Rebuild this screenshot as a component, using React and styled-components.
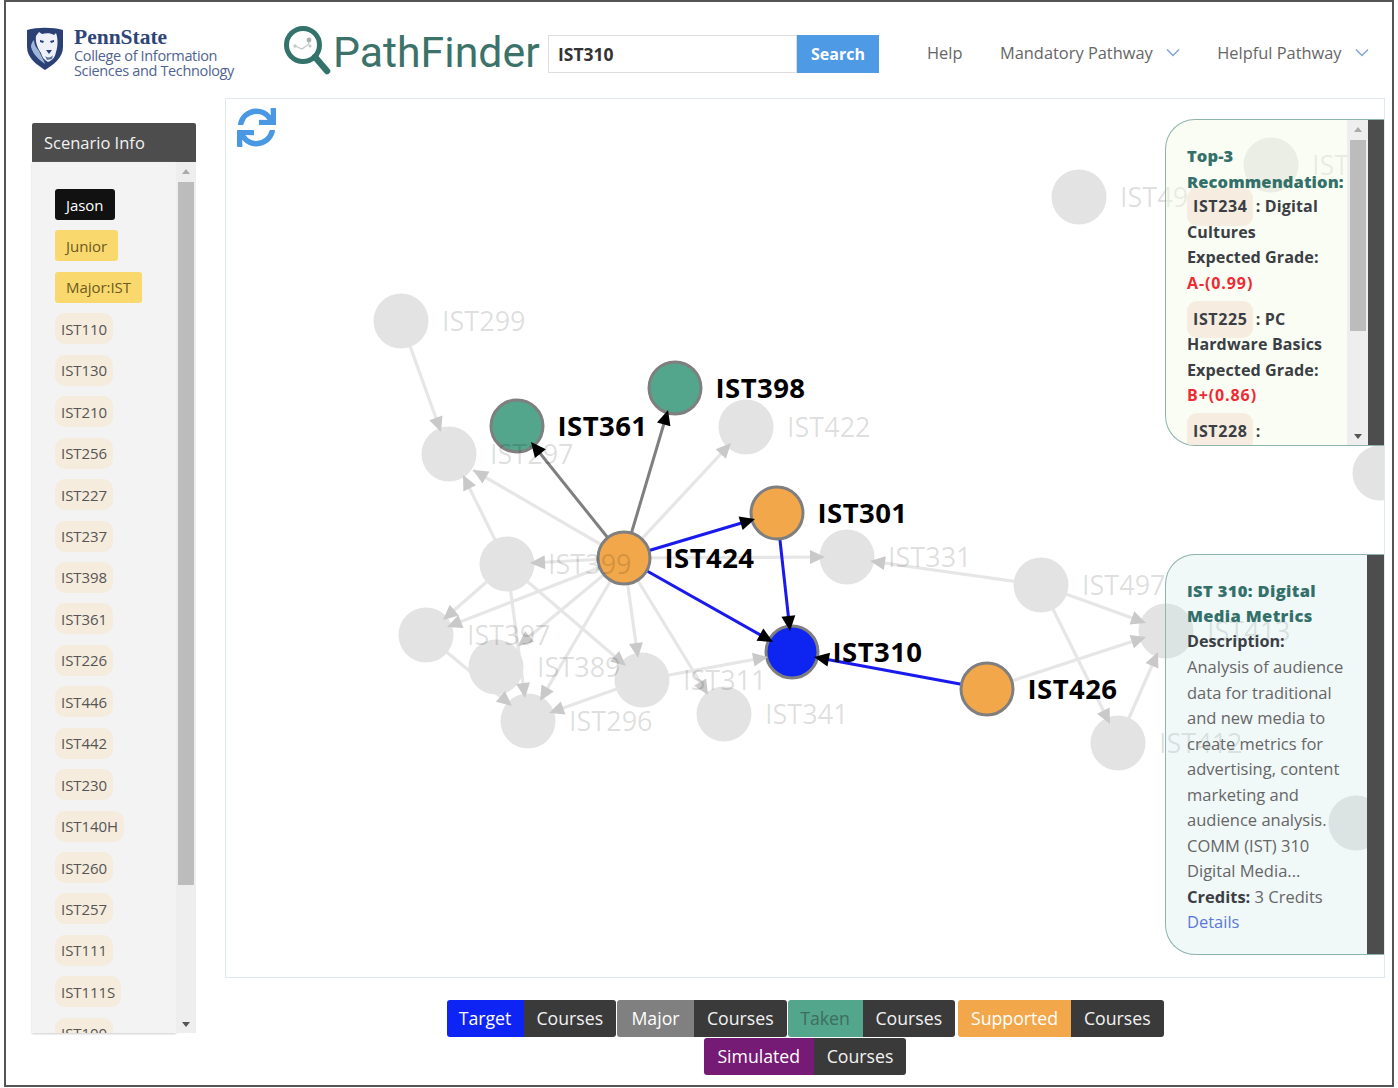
import React from "react";
import styled, { createGlobalStyle } from "styled-components";
import { FaSync } from "react-icons/fa";

const GlobalStyle = createGlobalStyle`
  html, body { margin: 0; padding: 0; background: #fff; }
  body { font-family: "Open Sans", "Liberation Sans", sans-serif; }
`;

const Frame = styled.div`
  box-sizing: border-box;
  width: 1390px;
  height: 1087px;
  margin: 0 0 0 4px;
  border: 2px solid #555;
`;

const Header = styled.header`
  height: 96px;
  display: flex;
  align-items: center;
  padding-left: 21px;
`;
const Brand = styled.div`
  display: flex;
  align-items: center;
  gap: 11px;
  width: 256px;
  margin-top: 4px;
`;
const ShieldSvg = styled.svg`
  flex: none;
  margin-bottom: 8px;
`;
const BrandText = styled.div`
  color: #50648f;
  font-size: 14.5px;
  line-height: 15px;
  letter-spacing: -0.35px;
  white-space: nowrap;
`;
const PennState = styled.div`
  font-family: "Liberation Serif", serif;
  font-weight: 700;
  font-size: 21.5px;
  line-height: 21px;
  letter-spacing: 0;
  color: #2e4577;
`;
const Product = styled.div`
  display: flex;
  align-items: center;
  gap: 2px;
  width: 265px;
  margin-top: 2px;
`;
const ProductName = styled.div`
  font-family: Roboto, sans-serif;
  font-size: 42.8px;
  color: #3b7269;
  white-space: nowrap;
  margin-top: 2px;
`;
const SearchBox = styled.div`
  display: flex;
  height: 38px;
  margin-top: 7px;
`;
const SearchInput = styled.div`
  box-sizing: border-box;
  width: 249px;
  border: 1px solid #ddd;
  padding-left: 9px;
  display: flex;
  align-items: center;
  font-size: 17.5px;
  font-weight: 700;
  color: #333;
`;
const SearchButton = styled.div`
  width: 82px;
  background: #4f9ae4;
  color: #fff;
  font-size: 16px;
  font-weight: 700;
  display: flex;
  align-items: center;
  justify-content: center;
`;
const Nav = styled.nav`
  display: flex;
  align-items: center;
  margin-left: 48px;
  margin-top: 5px;
  gap: 37.5px;
`;
const NavItem = styled.div`
  display: flex;
  align-items: center;
  gap: 13px;
  font-size: 16.4px;
  color: #666;
  white-space: nowrap;
`;

const Body = styled.div`
  display: flex;
  align-items: flex-start;
  padding-left: 26px;
`;
const Sidebar = styled.aside`
  width: 164px;
  margin-top: 25px;
  margin-right: 29px;
  flex: none;
`;
const SidebarTitle = styled.div`
  height: 39px;
  box-sizing: border-box;
  padding-left: 12px;
  display: flex;
  align-items: center;
  background: #4d4d4d;
  color: #f2f2f2;
  font-size: 16.5px;
  border-radius: 2px 2px 0 0;
`;
const SidebarBody = styled.div`
  display: flex;
  height: 871px;
`;
const TagList = styled.div`
  flex: 1;
  background: #f3f3f3;
  box-shadow: 0 1px 2px #ccc;
  overflow: hidden;
  display: flex;
  flex-direction: column;
  align-items: flex-start;
  gap: 10.45px;
  padding: 27px 0 0 23px;
`;
const Tag = styled.div`
  flex: none;
  box-sizing: border-box;
  height: 31px;
  display: flex;
  align-items: center;
  font-size: 15px;
  letter-spacing: -0.05px;
  padding: 0 ${(p) => (p.$kind === "course" ? "6px" : "11px")};
  border-radius: ${(p) => (p.$kind === "course" ? "10px" : "3px")};
  color: ${(p) => (p.$kind === "user" ? "#fff" : p.$kind === "level" ? "#6d5a1f" : "#555")};
  background: ${(p) => (p.$kind === "user" ? "#111" : p.$kind === "level" ? "#f9d96e" : "#f6ecdd")};
`;

const Track = styled.div`
  flex: none;
  box-sizing: border-box;
  width: ${(p) => p.$width}px;
  background: #eee;
  display: flex;
  flex-direction: column;
  align-items: center;
  justify-content: space-between;
  padding: 7px 0 6px;
`;
const TrackTop = styled.div`
  display: flex;
  flex-direction: column;
  align-items: center;
`;
const ArrowUp = styled.div`
  width: 0;
  height: 0;
  border: 4px solid transparent;
  border-top: 0;
  border-bottom: 5px solid #aaa;
`;
const ArrowDown = styled.div`
  width: 0;
  height: 0;
  border: 4px solid transparent;
  border-bottom: 0;
  border-top: 5px solid #555;
`;
const Thumb = styled.div`
  width: 16px;
  height: ${(p) => p.$height}px;
  margin-top: ${(p) => p.$offset}px;
  background: #bcbcbc;
`;

const MainColumn = styled.div`
  width: 1160px;
  flex: none;
`;
const Canvas = styled.main`
  position: relative;
  box-sizing: border-box;
  height: 880px;
  border: 1px solid #dfe9ee;
  overflow: hidden;
`;
const GraphSvg = styled.svg`
  display: block;
`;
const NodeLabel = styled.text`
  font-family: "Open Sans", sans-serif;
  dominant-baseline: central;
  font-size: ${(p) => (p.$active ? "27.5px" : "27px")};
  letter-spacing: ${(p) => (p.$active ? "0.45px" : "0")};
  font-weight: ${(p) => (p.$active ? 700 : 400)};
  fill: ${(p) => (p.$active ? "#000" : "rgba(0, 0, 0, 0.14)")};
`;
const RefreshButton = styled.div`
  position: absolute;
  left: 11px;
  top: 9px;
  color: #4a98e4;
  font-size: 39px;
  line-height: 0;
`;

const Panel = styled.section`
  position: absolute;
  right: 0;
  top: ${(p) => p.$top}px;
  box-sizing: border-box;
  width: 219px;
  height: ${(p) => p.$height}px;
  display: flex;
  overflow: hidden;
  border: 1px solid #8fb3ad;
  border-right: 0;
  border-radius: 30px 0 0 30px;
  background: ${(p) => p.$bg};
`;
const PanelBody = styled.div`
  flex: 1;
  min-width: 0;
  overflow: hidden;
  padding: ${(p) => p.$pad};
  font-size: 16.5px;
  line-height: 25.5px;
  color: #666;
`;
const DarkStrip = styled.div`
  flex: none;
  width: ${(p) => p.$width}px;
  background: #4d4d4d;
`;
const PanelTitle = styled.div`
  font-weight: 800;
  font-size: 16.5px;
  letter-spacing: ${(p) => p.$spacing}px;
  color: #33706a;
`;
const Strong = styled.div`
  font-weight: 700;
  font-size: 16.2px;
  color: #3b3f45;
`;
const Rec = styled.div`
  font-weight: 700;
  font-size: 16px;
  letter-spacing: 0.15px;
  color: #3b3f45;
  margin-bottom: 10.5px;
`;
const RecTag = styled.span`
  display: inline-block;
  padding: 6px;
  margin: -6px -2px -6px 0;
  border-radius: 10px;
  background: #f6ecdf;
  line-height: 25.5px;
  letter-spacing: 0.6px;
`;
const ExpectedLabel = styled.div`
  font-size: 16.2px;
  letter-spacing: 0.05px;
`;
const Grade = styled.div`
  color: #ee2a35;
  letter-spacing: 0.9px;
`;
const Bold = styled.b`
  color: #3b3f45;
`;
const DetailsLink = styled.a`
  display: block;
  color: #5b78d8;
`;

const Legend = styled.footer`
  display: flex;
  flex-wrap: wrap;
  justify-content: center;
  row-gap: 1px;
  width: 740px;
  margin: 22px auto 0;
`;
const LegendGroup = styled.div`
  display: flex;
  height: 37px;
  margin-right: ${(p) => p.$gap}px;
  font-size: 17.7px;
  line-height: 37px;
  text-align: center;
  border-radius: 3px;
  overflow: hidden;
`;
const LegendName = styled.div`
  width: ${(p) => p.$width}px;
  background: ${(p) => p.$bg};
  color: ${(p) => p.$color};
  white-space: nowrap;
`;
const LegendCourses = styled.div`
  width: 92.5px;
  background: #3a3a3a;
  color: #f2f2f2;
`;

const Shield = () => (
  <ShieldSvg width="36" height="43" viewBox="0 0 36 43">
    <path d="M0 3 C10 0 26 0 36 3 L36 20 C36 31 26 38 18 43 C10 38 0 31 0 20Z" fill="#2b4175" />
    <path d="M4 20 C6 27 11 32 18 37 C17 33 14 29 12 24 C9 21 7 17 7 13 C5 15 4 17 4 20Z" fill="#9fb6d8" />
    <path d="M9 9 L12 5 L15 7 C19 6 24 6 27 8 L29 6 C31 11 31 19 29 25 C28 30 26 33 21 35 C17 33 15 30 14 26 C11 22 8 15 9 9Z" fill="#eef2f8" />
    <path d="M13 13 L17 14 L16 16 L13 15Z M23 14 L27 13 L27 15 L24 16Z M19 23 L25 23 L22 27Z" fill="#2b4175" />
    <path d="M18 29 C20 31 24 31 26 28 L25 32 L20 33Z" fill="#5a76a8" />
  </ShieldSvg>
);

const Lens = () => (
  <svg width="48" height="50" viewBox="0 0 48 50">
    <circle cx="20" cy="19" r="16.5" fill="none" stroke="#33736b" strokeWidth="5" />
    <path d="M32 31 L44 45" stroke="#33736b" strokeWidth="6.5" strokeLinecap="round" />
    <path d="M12 20 L19 23 L26 18 M25 14 L26 18" stroke="#c3c9c8" strokeWidth="1.2" fill="none" />
    <circle cx="12" cy="20" r="1.7" fill="#c3c9c8" />
    <circle cx="26" cy="14" r="2.4" fill="#a8b3b1" />
    <circle cx="27" cy="20" r="1.5" fill="#c3c9c8" />
  </svg>
);

const Chevron = () => (
  <svg width="14" height="9" viewBox="0 0 14 9">
    <path d="M1 1.5 L7 7.5 L13 1.5" fill="none" stroke="#7fa4d6" strokeWidth="1.4" />
  </svg>
);

const Scrollbar = ({ width, offset, height }) => (
  <Track $width={width}>
    <TrackTop>
      <ArrowUp />
      <Thumb $offset={offset} $height={height} />
    </TrackTop>
    <ArrowDown />
  </Track>
);

const nodes = {
  a299: { x: 401, y: 321, label: "IST299" },
  a297: { x: 449, y: 454, label: "IST297" },
  a361: { x: 517, y: 426, label: "IST361", fill: "#53a58b" },
  a398: { x: 675, y: 388, label: "IST398", fill: "#53a58b" },
  a422: { x: 746, y: 427, label: "IST422" },
  a301: { x: 777, y: 513, label: "IST301", fill: "#f2a74a" },
  a424: { x: 624, y: 558, label: "IST424", fill: "#f2a74a" },
  a399: { x: 507, y: 564, label: "IST399" },
  a331: { x: 847, y: 557, label: "IST331" },
  a497: { x: 1041, y: 585, label: "IST497" },
  a397: { x: 426, y: 635, label: "IST397" },
  a389: { x: 496, y: 667, label: "IST389" },
  a311: { x: 642, y: 680, label: "IST311" },
  a296: { x: 528, y: 721, label: "IST296" },
  a341: { x: 724, y: 714, label: "IST341" },
  a310: { x: 792, y: 652, label: "IST310", fill: "#0e24f0" },
  a426: { x: 987, y: 689, label: "IST426", fill: "#f2a74a" },
  a413: { x: 1166, y: 631, label: "IST413" },
  a412: { x: 1118, y: 743, label: "IST412" },
  a498: { x: 1079, y: 197, label: "IST498" },
  a470: { x: 1271, y: 165, label: "IST470" },
  a440: { x: 1380, y: 473, label: "IST440" },
  a495: { x: 1356, y: 823, label: "IST495" },
};

// from, to, arrow tip (page coordinates), colour for the highlighted ones
const edges = [
  ["a299", "a297", 441, 432],
  ["a424", "a297", 473, 470],
  ["a399", "a297", 463, 475],
  ["a424", "a399", 530, 563],
  ["a424", "a397", 447, 627],
  ["a399", "a397", 443, 620],
  ["a399", "a311", 626, 666],
  ["a399", "a296", 525, 698],
  ["a424", "a389", 518, 646],
  ["a424", "a296", 540, 701],
  ["a424", "a311", 638, 658],
  ["a424", "a341", 708, 695],
  ["a397", "a296", 512, 706],
  ["a311", "a296", 549, 713],
  ["a311", "a310", 768, 657],
  ["a424", "a422", 731, 443],
  ["a424", "a331", 825, 557],
  ["a497", "a331", 870, 561],
  ["a497", "a413", 1146, 623],
  ["a426", "a413", 1146, 637],
  ["a497", "a412", 1110, 724],
  ["a412", "a413", 1158, 652],
  ["a424", "a361", 531, 442, "#7f7f7f"],
  ["a424", "a398", 668, 410, "#7f7f7f"],
  ["a424", "a301", 755, 519, "#1a1aee"],
  ["a424", "a310", 773, 642, "#1a1aee"],
  ["a301", "a310", 790, 631, "#1a1aee"],
  ["a426", "a310", 814, 657, "#1a1aee"],
];

const arrowPoints = (sx, sy, tx, ty, len, half) => {
  const d = Math.hypot(tx - sx, ty - sy);
  const ux = (tx - sx) / d;
  const uy = (ty - sy) / d;
  const bx = tx - ux * len;
  const by = ty - uy * len;
  return `${tx},${ty} ${bx - uy * half},${by + ux * half} ${bx + uy * half},${by - ux * half}`;
};

const Graph = () => (
  <GraphSvg width="1158" height="878" viewBox="226 99 1158 878">
    {edges.map(([from, to, tx, ty, color]) => (
      <line
        key={from + to}
        x1={nodes[from].x}
        y1={nodes[from].y}
        x2={tx}
        y2={ty}
        stroke={color || "#e6e6e6"}
        strokeWidth={color ? 3 : 3.2}
      />
    ))}
    {Object.entries(nodes).map(([id, n]) => (
      <circle
        key={id}
        cx={n.x}
        cy={n.y}
        r={n.fill ? 26 : 27.5}
        fill={n.fill || "#e3e3e3"}
        stroke={n.fill ? "#7f7f7f" : "none"}
        strokeWidth="3"
      />
    ))}
    {edges.map(([from, to, tx, ty, color]) => (
      <polygon
        key={from + to}
        points={arrowPoints(nodes[from].x, nodes[from].y, tx, ty, 15, 7)}
        fill={color ? "#000" : "#c9c9c9"}
      />
    ))}
    {Object.entries(nodes).map(([id, n]) => (
      <NodeLabel key={id} x={n.x + (n.fill ? 40.5 : 41)} y={n.y - 1} $active={!!n.fill}>
        {n.label}
      </NodeLabel>
    ))}
  </GraphSvg>
);

const tags = [
  ["Jason", "user"],
  ["Junior", "level"],
  ["Major:IST", "level"],
  ...["IST110", "IST130", "IST210", "IST256", "IST227", "IST237", "IST398", "IST361", "IST226", "IST446", "IST442", "IST230", "IST140H", "IST260", "IST257", "IST111", "IST111S", "IST100"].map((c) => [c, "course"]),
];

const recommendations = [
  ["IST234", "Digital Cultures", "A-(0.99)"],
  ["IST225", "PC Hardware Basics", "B+(0.86)"],
  ["IST228", "", ""],
];

const legend = [
  ["Target", 77, "#0e24f5", "#fff", 1],
  ["Major", 77, "#808080", "#fff", 1],
  ["Taken", 75, "#53a58b", "#3c6e60", 3],
  ["Supported", 113, "#f2a74a", "#fff", 0],
  ["Simulated", 110, "#751a75", "#fff", 0],
];

export default function App() {
  return (
    <>
      <GlobalStyle />
      <Frame>
        <Header>
          <Brand>
            <Shield />
            <BrandText>
              <PennState>PennState</PennState>
              College of Information
              <br />
              Sciences and Technology
            </BrandText>
          </Brand>
          <Product>
            <Lens />
            <ProductName>PathFinder</ProductName>
          </Product>
          <SearchBox>
            <SearchInput>IST310</SearchInput>
            <SearchButton>Search</SearchButton>
          </SearchBox>
          <Nav>
            <NavItem>Help</NavItem>
            <NavItem>
              Mandatory Pathway <Chevron />
            </NavItem>
            <NavItem>
              Helpful Pathway <Chevron />
            </NavItem>
          </Nav>
        </Header>
        <Body>
          <Sidebar>
            <SidebarTitle>Scenario Info</SidebarTitle>
            <SidebarBody>
              <TagList>
                {tags.map(([name, kind]) => (
                  <Tag key={name} $kind={kind}>
                    {name}
                  </Tag>
                ))}
              </TagList>
              <Scrollbar width={20} offset={8} height={703} />
            </SidebarBody>
          </Sidebar>
          <MainColumn>
            <Canvas>
              <Graph />
              <RefreshButton>
                <FaSync />
              </RefreshButton>
              <Panel $top={20} $height={327} $bg="rgba(244, 251, 228, 0.45)">
                <PanelBody $pad="23px 0 0 21px">
                  <PanelTitle $spacing={0.1}>Top-3 Recommendation:</PanelTitle>
                  {recommendations.map(([code, name, grade]) => (
                    <Rec key={code}>
                      <RecTag>{code}</RecTag> : {name}
                      {grade && (
                        <>
                          <ExpectedLabel>Expected Grade:</ExpectedLabel>
                          <Grade>{grade}</Grade>
                        </>
                      )}
                    </Rec>
                  ))}
                </PanelBody>
                <Scrollbar width={21} offset={8} height={191} />
                <DarkStrip $width={16} />
              </Panel>
              <Panel $top={455} $height={401} $bg="rgba(196, 228, 228, 0.25)">
                <PanelBody $pad="22.5px 13px 0 21px">
                  <PanelTitle $spacing={0.35}>IST 310: Digital Media Metrics</PanelTitle>
                  <Strong>Description:</Strong>
                  Analysis of audience data for traditional and new media to create metrics for advertising, content marketing and audience analysis. COMM (IST) 310 Digital Media...
                  <div>
                    <Bold>Credits:</Bold> 3 Credits
                  </div>
                  <DetailsLink>Details</DetailsLink>
                </PanelBody>
                <DarkStrip $width={17} />
              </Panel>
            </Canvas>
            <Legend>
              {legend.map(([name, width, bg, color, gap]) => (
                <LegendGroup key={name} $gap={gap}>
                  <LegendName $width={width} $bg={bg} $color={color}>
                    {name}
                  </LegendName>
                  <LegendCourses>Courses</LegendCourses>
                </LegendGroup>
              ))}
            </Legend>
          </MainColumn>
        </Body>
      </Frame>
    </>
  );
}
